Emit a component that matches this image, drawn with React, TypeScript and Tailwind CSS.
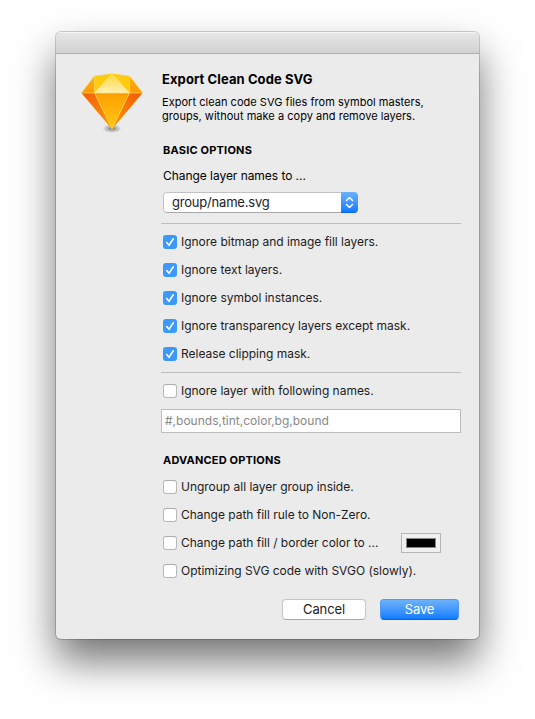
import React from "react";

function Diamond() {
  return (
    <svg width="70" height="66" viewBox="0 0 70 66" className="block">
      <defs>
        <linearGradient id="body" x1="0" y1="0" x2="0" y2="1">
          <stop offset="0" stopColor="#ff9f00" />
          <stop offset="1" stopColor="#ffc814" />
        </linearGradient>
        <linearGradient id="left" x1="0" y1="0" x2="1" y2="1">
          <stop offset="0" stopColor="#f45f08" />
          <stop offset="1" stopColor="#ff9608" />
        </linearGradient>
        <linearGradient id="right" x1="1" y1="0" x2="0" y2="1">
          <stop offset="0" stopColor="#f25a08" />
          <stop offset="1" stopColor="#ff9608" />
        </linearGradient>
        <linearGradient id="crown" x1="0" y1="0" x2="0" y2="1">
          <stop offset="0" stopColor="#ffd83c" />
          <stop offset="1" stopColor="#fff0b4" />
        </linearGradient>
        <linearGradient id="wing" x1="0" y1="0" x2="0" y2="1">
          <stop offset="0" stopColor="#ffb20c" />
          <stop offset="1" stopColor="#ff9a08" />
        </linearGradient>
        <radialGradient id="ground">
          <stop offset="0" stopColor="#000" stopOpacity=".5" />
          <stop offset=".5" stopColor="#000" stopOpacity=".22" />
          <stop offset="1" stopColor="#000" stopOpacity="0" />
        </radialGradient>
      </defs>
      <ellipse cx="36" cy="60.500" rx="9.500" ry="4.500" fill="url(#ground)" />
      <path d="M5.500 25 18.500 8 36 5.500 53.500 8 66.500 25 36 61Z" fill="#ffcb10" />
      <path d="M18.500 8 5.500 25H18.500ZM53.500 8 66.500 25H53.500Z" fill="url(#wing)" />
      <path d="M5.500 25H18.500L36 61Z" fill="url(#left)" />
      <path d="M66.500 25H53.500L36 61Z" fill="url(#right)" />
      <path d="M18.500 25H53.500L36 61Z" fill="url(#body)" />
      <path d="M36 5.500 18.500 25H53.500Z" fill="url(#crown)" />
      <path d="M18.500 8V25L36 61 53.500 25V8M36 5.500 18.500 25M36 5.500 53.500 25M5.500 25H66.500" fill="none" stroke="#ffe070" strokeWidth=".8" strokeOpacity=".75" />
    </svg>
  );
}

function Check({ label, checked = false }: { label: string; checked?: boolean }) {
  return (
    <label className="flex h-7 items-center text-[12px] text-[#1c1c1c]">
      <span
        className={
          checked
            ? "mr-1 flex size-3.5 items-center justify-center rounded-[3px] bg-[#3b99fc]"
            : "mr-1 size-3.5 rounded-[3px] border border-[#b8b8b8] border-t-[#aaa] bg-white"
        }
      >
        {checked && (
          <svg width="14" height="14" viewBox="0 0 14 14">
            <path d="M3.700 7.600 6 10.300 10.300 3.800" fill="none" stroke="#fff" strokeWidth="1.600" strokeLinecap="round" strokeLinejoin="round" />
          </svg>
        )}
      </span>
      <span className="tracking-[-0.02px]">{label}</span>
    </label>
  );
}

export default function App() {
  return (
    <div className="h-[719px] w-[535px] overflow-hidden bg-white pt-8 pl-14 font-['Inter',sans-serif] text-black">
      <div className="h-[607px] w-[423px] overflow-hidden rounded-[5px] bg-[#ebebeb] shadow-[0_0_0_1px_rgba(0,0,0,0.18),0_22px_40px_rgba(0,0,0,0.55)]">
        <div className="h-[22px] border-t border-b border-t-[#f5f5f5] border-b-[#b0b0b0] bg-linear-to-b from-[#e7e7e7] to-[#d2d2d2]" />
        <div className="flex">
          <div className="w-[105px] shrink-0 pt-[14px] pl-5">
            <Diamond />
          </div>
          <div className="w-[300px]">
            <h1 className="mt-4 ml-px h-[18px] text-[13px] leading-[18px] font-bold tracking-[0.09px] whitespace-nowrap">Export Clean Code SVG</h1>
            <p className="mt-[7px] ml-px h-7 text-[11px] leading-[14px] tracking-[0.03px] whitespace-nowrap">
              Export clean code SVG files from symbol masters,
              <br />
              groups, without make a copy and remove layers.
            </p>
            <h2 className="mt-[19px] ml-0.5 h-4 text-[11px] leading-4 font-bold tracking-[0.2px]">BASIC OPTIONS</h2>
            <div className="mt-2.5 ml-0.5 h-4 text-[12px] leading-4 tracking-[-0.05px]">Change layer names to ...</div>
            <div className="mt-2 ml-0.5 flex h-[21px] w-[195px] overflow-hidden rounded-[4px]">
              <div className="flex flex-1 items-center rounded-l-[4px] border border-r-0 border-[#c2c2c2] border-b-[#a9a9a9] bg-white pl-2 text-[13px] tracking-[-0.2px] text-[#1c1c1c]">group/name.svg</div>
              <div className="flex w-[17px] items-center justify-center border-b border-[#0b63e8] bg-linear-to-b from-[#69b1fa] to-[#0d7bff]">
                <svg width="9" height="13" viewBox="0 0 9 13">
                  <path d="M1.500 4.500 4.500 1.500 7.500 4.500M1.500 8.500 4.500 11.500 7.500 8.500" fill="none" stroke="#fff" strokeWidth="1.500" strokeLinecap="round" strokeLinejoin="round" />
                </svg>
              </div>
            </div>
            <div className="mt-[10px] h-px bg-[#bdbdbd]" />
            <div className="mt-1 ml-0.5">
              <Check checked label="Ignore bitmap and image fill layers." />
              <Check checked label="Ignore text layers." />
              <Check checked label="Ignore symbol instances." />
              <Check checked label="Ignore transparency layers except mask." />
              <Check checked label="Release clipping mask." />
            </div>
            <div className="mt-1 h-px bg-[#bdbdbd]" />
            <div className="mt-1 ml-0.5">
              <Check label="Ignore layer with following names." />
            </div>
            <div className="mt-[4px] flex h-6 items-center border border-[#bdbdbd] bg-white pl-[3px] text-[12px] text-[#888]">#,bounds,tint,color,bg,bound</div>
            <h2 className="mt-[19px] ml-0.5 h-4 text-[11px] leading-4 font-bold tracking-[0.17px]">ADVANCED OPTIONS</h2>
            <div className="mt-[5px] ml-0.5">
              <Check label="Ungroup all layer group inside." />
              <Check label="Change path fill rule to Non-Zero." />
              <div className="flex h-7 items-center justify-between pr-5">
                <Check label="Change path fill / border color to ..." />
                <div className="flex h-5 w-10 items-center justify-center border border-[#b5b5b5] bg-[#f0f0f0]">
                  <div className="h-2.5 w-[30px] border border-[#858585] bg-black" />
                </div>
              </div>
              <Check label="Optimizing SVG code with SVGO (slowly)." />
            </div>
            <div className="mt-[14px] mr-0.5 flex justify-end gap-[14px] text-[13px] tracking-[-0.1px]">
              <button className="h-[21px] w-21 rounded-[4px] border border-[#c6c6c6] border-b-[#aaa] bg-white leading-[19px] text-[#1c1c1c]">Cancel</button>
              <button className="h-[21px] w-[79px] rounded-[4px] border border-[#4a9bf8] border-b-[#0a62e6] bg-linear-to-b from-[#6bb2fa] to-[#0d7bff] leading-[19px] text-white">Save</button>
            </div>
          </div>
        </div>
      </div>
    </div>
  );
}
